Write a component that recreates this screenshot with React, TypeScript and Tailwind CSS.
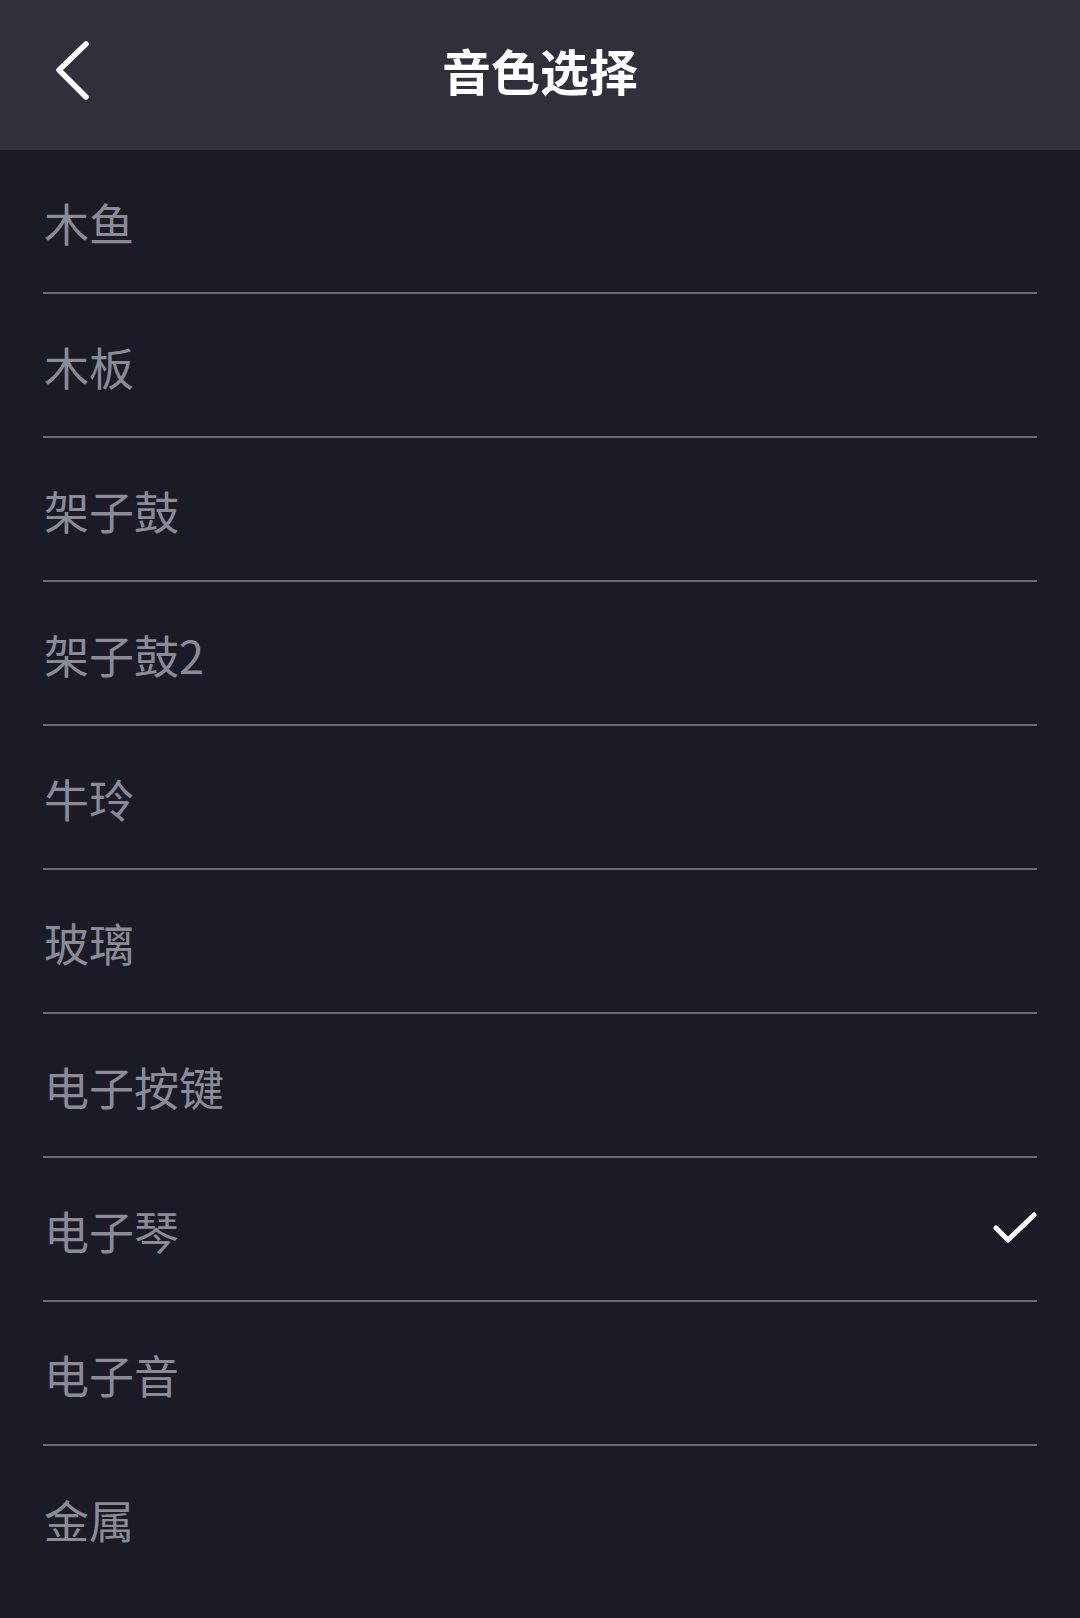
import React from 'react';

const tones = ['木鱼', '木板', '架子鼓', '架子鼓2', '牛玲', '玻璃', '电子按键', '电子琴', '电子音', '金属'];

export default function App() {
  const selected = '电子琴';

  return (
    <div
      className="w-[1080px] h-[1618px] bg-[#1b1b27] overflow-hidden"
      style={{ fontFamily: '"Noto Sans CJK SC", "Noto Sans", sans-serif' }}
    >
      <header className="relative h-[150px] bg-[#30303c] flex items-center justify-center">
        <button className="absolute left-[50px] top-[38px] w-[44px] h-[66px] flex items-center justify-center">
          <svg width="44" height="66" viewBox="0 0 44 66">
            <path d="M36 6 L9 32 L36 59" fill="none" stroke="#ffffff" strokeWidth="5.5" strokeLinecap="round" strokeLinejoin="round" />
          </svg>
        </button>
        <h1 className="text-[49px] leading-none font-bold text-white -mt-[12px]">音色选择</h1>
      </header>

      <ul className="px-[43px]">
        {tones.map((name, idx) => (
          <li
            key={name}
            className={`flex items-center justify-between h-[144px] pt-[3px] ${idx < tones.length - 1 ? 'border-b-2 border-[#6b6b75]' : ''} ${idx === 0 ? 'h-[143px]' : ''}`}
          >
            <span className="ml-[1px] text-[45px] leading-none text-[#8b8b96]">{name}</span>
            {name === selected && (
              <svg width="44" height="32" viewBox="0 0 44 32" className="-mt-[6px]">
                <path d="M3 16 L15 28 L41 3" fill="none" stroke="#ffffff" strokeWidth="5" strokeLinecap="round" strokeLinejoin="round" />
              </svg>
            )}
          </li>
        ))}
      </ul>
    </div>
  );
}
